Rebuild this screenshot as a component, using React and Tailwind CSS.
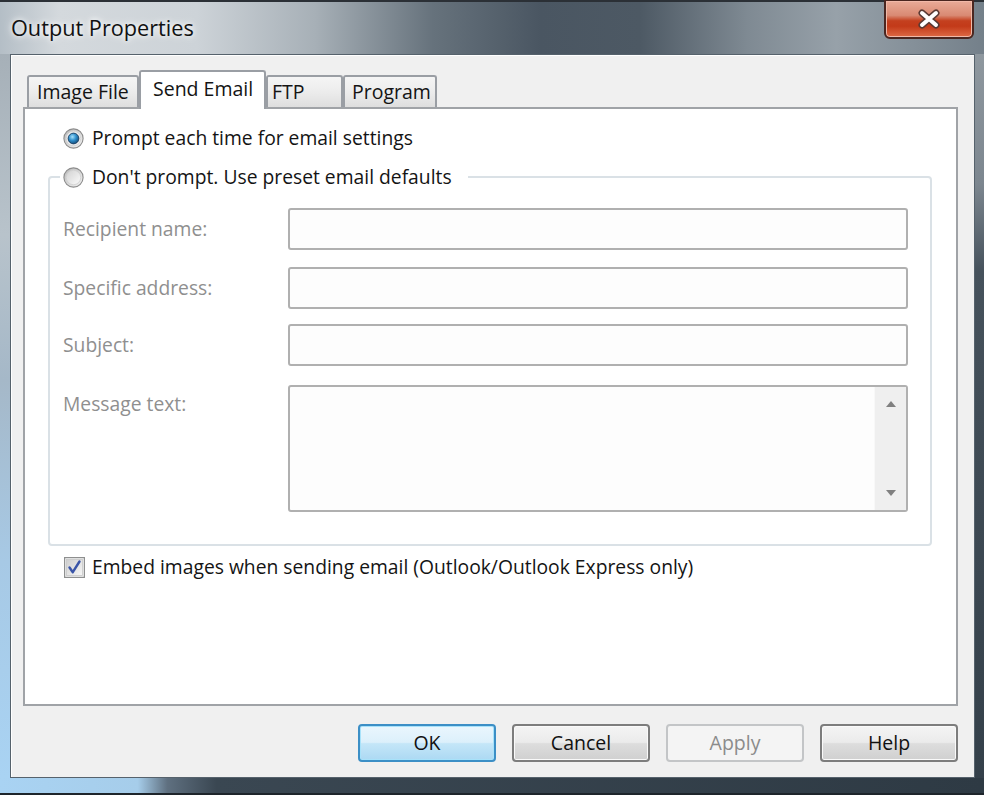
import React from "react";

const font = "font-['Open_Sans','Noto_Sans',sans-serif]";

function Radio({ checked, id }) {
  return (
    <svg width="21" height="21" viewBox="0 0 21 21" className="shrink-0">
      <defs>
        <linearGradient id={`ro${id}`} x1="0" y1="0" x2="1" y2="1">
          <stop offset="0" stopColor="#b9b9b9" />
          <stop offset="1" stopColor="#f4f4f4" />
        </linearGradient>
        <linearGradient id={`ri${id}`} x1="0" y1="0" x2="1" y2="1">
          <stop offset="0" stopColor="#d2d2d2" />
          <stop offset="1" stopColor="#fbfbfb" />
        </linearGradient>
        <radialGradient id={`rd${id}`} cx="0.4" cy="0.35" r="0.75">
          <stop offset="0" stopColor="#a6e1fb" />
          <stop offset="0.45" stopColor="#2f8fcc" />
          <stop offset="1" stopColor="#0b3b66" />
        </radialGradient>
      </defs>
      <circle cx="10.5" cy="10.5" r="9.6" fill={`url(#ro${id})`} stroke="#8c8c8c" strokeWidth="1.1" />
      <circle cx="10.5" cy="10.5" r="7.2" fill={checked ? "#f6f6f6" : `url(#ri${id})`} stroke="#d0d0d0" strokeWidth="0.8" />
      {checked && (
        <circle cx="10.5" cy="10.5" r="5.4" fill={`url(#rd${id})`} stroke="#173a5c" strokeWidth="0.9" />
      )}
    </svg>
  );
}

function Checkbox() {
  return (
    <svg width="21" height="21" viewBox="0 0 21 21" className="shrink-0">
      <defs>
        <linearGradient id="cbg" x1="0" y1="0" x2="1" y2="1">
          <stop offset="0" stopColor="#cfcfcf" />
          <stop offset="1" stopColor="#f7f7f7" />
        </linearGradient>
      </defs>
      <rect x="0.6" y="0.6" width="19.8" height="19.8" fill="#f4f4f4" stroke="#8e8f8f" strokeWidth="1.2" />
      <rect x="2.5" y="2.5" width="16" height="16" fill="url(#cbg)" stroke="#c8c8c8" strokeWidth="0.8" />
      <path d="M5.5 10.5 L8.8 15.2 L15.5 4.5" fill="none" stroke="#3a55a8" strokeWidth="2.4" strokeLinejoin="round" strokeLinecap="round" />
    </svg>
  );
}

function CloseButton() {
  return (
    <div className="mr-[10px] mt-[-3px] w-[90px] h-[40px] rounded-b-[6px] border-2 border-[#4a2620] shadow-[inset_0_0_0_1px_#f1b9a8] bg-[linear-gradient(180deg,#e9ab98_0%,#d98a73_40%,#c4401f_55%,#c33a19_70%,#dd6a45_100%)] flex items-center justify-center">
      <svg width="26" height="20" viewBox="0 0 26 20">
        <path d="M6 4 L20 16 M20 4 L6 16" stroke="#5a3a34" strokeWidth="7" strokeLinecap="round" />
        <path d="M6 4 L20 16 M20 4 L6 16" stroke="#ffffff" strokeWidth="4" strokeLinecap="round" />
      </svg>
    </div>
  );
}

function Tab({ label, selected, w, pl }) {
  if (selected) {
    return (
      <div
        className={`relative z-10 h-[39px] -mb-[2px] ${w} ${pl} border-2 border-b-0 border-[#9a9ea4] rounded-t-[3px] bg-white flex items-start pt-[4px] text-[19.5px] leading-[26px]`}
      >
        {label}
      </div>
    );
  }
  return (
    <div
      className={`h-[32px] ${w} ${pl} border-2 border-b-0 border-[#9a9ea4] rounded-t-[3px] bg-[linear-gradient(180deg,#f5f5f5_0%,#ececec_50%,#dedede_100%)] flex items-center text-[19.5px] leading-[26px]`}
    >
      {label}
    </div>
  );
}

function Field({ label, className = "" }) {
  return (
    <div className={`flex items-center ${className}`}>
      <div className="w-[225px] shrink-0 text-[#8f8f8f] text-[19.3px] leading-[26px]">{label}</div>
      <div className="flex-1 h-[42px] border-2 border-[#b0b0b0] rounded-[3px] bg-[#fdfdfd]" />
    </div>
  );
}

function Btn({ children, kind }) {
  const base =
    "w-[138px] h-[38px] rounded-[4px] flex items-center justify-center text-[19.5px] leading-[26px]";
  const styles = {
    def: "border-2 border-[#3c8fc6] shadow-[inset_0_0_0_1px_#a8e2fa] bg-[linear-gradient(180deg,#eaf6fd_0%,#dcf0fb_48%,#c4e6f8_52%,#acd9f3_100%)] text-[#111]",
    norm: "border-2 border-[#7d7d7d] shadow-[inset_0_0_0_1px_#fafafa] bg-[linear-gradient(180deg,#f4f4f4_0%,#ebebeb_48%,#dddddd_52%,#d0d0d0_100%)] text-[#111]",
    dis: "border-2 border-[#c3c5c7] bg-[#f4f4f4] text-[#8b8b8b]",
  };
  return <div className={`${base} ${styles[kind]}`}>{children}</div>;
}

export default function App() {
  return (
    <div className={`${font} w-[984px] h-[795px] flex flex-col overflow-hidden bg-[#34404a] text-[#141414]`}>
      {/* title bar */}
      <div className="h-[54px] shrink-0 flex items-start justify-between border-t-2 border-[#2b3036] bg-[linear-gradient(90deg,#b4bec6_0%,#d4d9dd_6%,#cdd3d8_20%,#a7b0b7_32%,#66727c_44%,#4a5662_55%,#4d5964_65%,#7f8a93_76%,#97a1a9_85%,#74808a_100%)]">
        <div className="pl-[11px] pt-[12px] text-[21.7px] leading-[28px] text-[#111] [text-shadow:0_0_10px_#ffffff,0_0_5px_#ffffff]">
          Output Properties
        </div>
        <CloseButton />
      </div>

      <div className="flex flex-1 min-h-0">
        {/* left frame */}
        <div className="w-[10px] shrink-0 bg-[linear-gradient(180deg,#a6b0b8_0%,#b8c3cb_25%,#a5b8c8_45%,#a7c9e5_70%,#a9d3f3_100%)]" />

        {/* client area */}
        <div className="flex-1 flex flex-col bg-[#f0f0f0] border border-[#56626c] shadow-[inset_1px_1px_0_#ffffff] pl-[12px] pr-[16px] pt-[15px]">
          {/* tabs */}
          <div className="h-[37px] flex items-end pl-[4px]">
            <Tab label="Image File" w="w-[112px]" pl="pl-[8px]" />
            <Tab label="Send Email" selected w="w-[127px]" pl="pl-[12px]" />
            <Tab label="FTP" w="w-[77px]" pl="pl-[4px]" />
            <Tab label="Program" w="w-[94px]" pl="pl-[7px]" />
          </div>

          {/* panel */}
          <div className="h-[599px] border-2 border-[#a0a3a7] bg-white flex flex-col">
            <div className="pl-[38px] pt-[16px] flex items-center gap-[8px] h-[42px] text-[19.3px] leading-[26px]">
              <Radio checked id="a" />
              <span>Prompt each time for email settings</span>
            </div>

            <fieldset className="ml-[23px] mr-[24px] mt-[13px] border-2 border-[#dae1e6] rounded-[4px]">
              <legend className="ml-[10px] pl-[3px] pr-[16px]">
                <div className="flex items-center gap-[8px] h-[26px] text-[19.3px] leading-[26px]">
                  <Radio id="b" />
                  <span>Don't prompt. Use preset email defaults</span>
                </div>
              </legend>
              <div className="pl-[13px] pr-[22px] pt-[18px] pb-[32px] flex flex-col">
                <Field label="Recipient name:" />
                <Field label="Specific address:" className="mt-[17px]" />
                <Field label="Subject:" className="mt-[15px]" />
                <div className="flex items-start mt-[19px]">
                  <div className="w-[225px] shrink-0 text-[#8f8f8f] text-[19.3px] leading-[26px] mt-[6px]">Message text:</div>
                  <div className="flex-1 h-[127px] border-2 border-[#b0b0b0] rounded-[3px] bg-[#fdfdfd] flex justify-end">
                    <div className="w-[32px] bg-[#efefef] border-l border-[#f8f8f8] flex flex-col items-center justify-between py-[13px]">
                      <svg width="12" height="8" viewBox="0 0 12 8">
                        <path d="M6 1 L11 7 L1 7 Z" fill="#808080" />
                      </svg>
                      <svg width="12" height="8" viewBox="0 0 12 8">
                        <path d="M1 1 L11 1 L6 7 Z" fill="#808080" />
                      </svg>
                    </div>
                  </div>
                </div>
              </div>
            </fieldset>

            <div className="pl-[39px] mt-[8px] flex items-center gap-[7px] h-[26px] text-[19.3px] leading-[26px]">
              <Checkbox />
              <span>Embed images when sending email (Outlook/Outlook Express only)</span>
            </div>
          </div>

          {/* buttons */}
          <div className="mt-[18px] flex justify-end gap-[16px]">
            <Btn kind="def">OK</Btn>
            <Btn kind="norm">Cancel</Btn>
            <Btn kind="dis">Apply</Btn>
            <Btn kind="norm">Help</Btn>
          </div>
        </div>

        {/* right frame */}
        <div className="w-[9px] shrink-0 bg-[linear-gradient(180deg,#8f989f_0%,#7c868f_18%,#46525c_30%,#34404a_100%)]" />
      </div>

      {/* bottom frame */}
      <div className="h-[17px] shrink-0 bg-[linear-gradient(90deg,#a9d3f3_0%,#a6cdea_14%,#5f7080_17%,#3a4752_22%,#2e3a44_100%)] border-b-2 border-[#1e252b]" />
    </div>
  );
}
